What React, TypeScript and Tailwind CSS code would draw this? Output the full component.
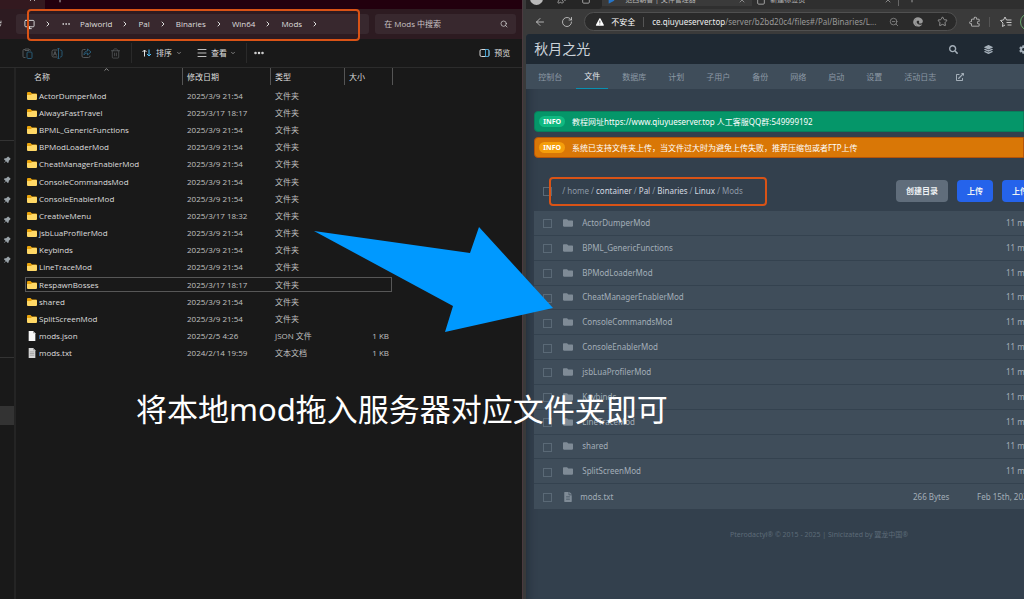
import { ReactNode } from "react";
import {
  ArrowLeft,
  ChevronDown,
  ChevronRight,
  ChevronUp,
  Ellipsis,
  File as FileIcon,
  Menu,
  Monitor,
  Plus,
  Puzzle,
  RotateCw,
  Search,
  Star,
  Trash2,
  X,
  ZoomOut,
} from "lucide-react";
import { FaCog, FaEdge, FaExternalLinkAlt, FaFileAlt, FaFolder, FaLayerGroup, FaSearch } from "react-icons/fa";
import { IoTriangle, IoWarning } from "react-icons/io5";
import { PiPushPinFill, PiPuzzlePiece } from "react-icons/pi";

type Entry = { name: string; date: string; kind: string; size?: string; icon?: "json" | "txt" };

const localEntries: Entry[] = [
  { name: "ActorDumperMod", date: "2025/3/9 21:54", kind: "文件夹" },
  { name: "AlwaysFastTravel", date: "2025/3/17 18:17", kind: "文件夹" },
  { name: "BPML_GenericFunctions", date: "2025/3/9 21:54", kind: "文件夹" },
  { name: "BPModLoaderMod", date: "2025/3/9 21:54", kind: "文件夹" },
  { name: "CheatManagerEnablerMod", date: "2025/3/9 21:54", kind: "文件夹" },
  { name: "ConsoleCommandsMod", date: "2025/3/9 21:54", kind: "文件夹" },
  { name: "ConsoleEnablerMod", date: "2025/3/9 21:54", kind: "文件夹" },
  { name: "CreativeMenu", date: "2025/3/17 18:32", kind: "文件夹" },
  { name: "jsbLuaProfilerMod", date: "2025/3/9 21:54", kind: "文件夹" },
  { name: "Keybinds", date: "2025/3/9 21:54", kind: "文件夹" },
  { name: "LineTraceMod", date: "2025/3/9 21:54", kind: "文件夹" },
  { name: "RespawnBosses", date: "2025/3/17 18:17", kind: "文件夹" },
  { name: "shared", date: "2025/3/9 21:54", kind: "文件夹" },
  { name: "SplitScreenMod", date: "2025/3/9 21:54", kind: "文件夹" },
  { name: "mods.json", date: "2025/2/5 4:26", kind: "JSON 文件", size: "1 KB", icon: "json" },
  { name: "mods.txt", date: "2024/2/14 19:59", kind: "文本文档", size: "1 KB", icon: "txt" },
];

const serverFolders = [
  "ActorDumperMod",
  "BPML_GenericFunctions",
  "BPModLoaderMod",
  "CheatManagerEnablerMod",
  "ConsoleCommandsMod",
  "ConsoleEnablerMod",
  "jsbLuaProfilerMod",
  "Keybinds",
  "LineTraceMod",
  "shared",
  "SplitScreenMod",
];

const serverTabs = ["控制台", "文件", "数据库", "计划", "子用户", "备份", "网络", "启动", "设置", "活动日志"];

function YellowFolder() {
  return (
    <svg viewBox="0 0 20 16" className="h-2 w-[10px] shrink-0" aria-hidden="true">
      <path d="M0 2a2 2 0 0 1 2-2h5l3 3h8a2 2 0 0 1 2 2v9H0z" fill="#e8a30c" />
      <path d="M0 6h8l2-2h8a2 2 0 0 1 2 2v8a2 2 0 0 1-2 2H2a2 2 0 0 1-2-2z" fill="#ffd866" />
    </svg>
  );
}

function Sheet({ lined }: { lined: boolean }) {
  return (
    <svg viewBox="0 0 14 18" className="mx-px h-[10px] w-2 shrink-0" aria-hidden="true">
      <path d="M1 0h8l4 4v14H1z" fill={lined ? "#d6d6d6" : "#f7f7f7"} />
      <path d="M9 0v4h4z" fill="#9a9a9a" />
      {lined && <path d="M3 7h8M3 10h8M3 13h8" stroke="#8d8d8d" strokeWidth="1.2" />}
    </svg>
  );
}

function PasteIcon() {
  return (
    <svg viewBox="0 0 22 22" className="size-[11px]" fill="none" strokeWidth="2" aria-hidden="true">
      <path d="M7 19H4a2 2 0 0 1-2-2V5a2 2 0 0 1 2-2h2M14 3h1a2 2 0 0 1 2 2M6 2h8v3H6z" stroke="#55585a" />
      <rect x="10" y="8" width="10" height="13" rx="2" stroke="#285a75" />
    </svg>
  );
}

function RenameIcon() {
  return (
    <svg viewBox="0 0 24 22" className="h-[11px] w-3" fill="none" strokeWidth="2" aria-hidden="true">
      <path d="M13 4H5a3 3 0 0 0-3 3v8a3 3 0 0 0 3 3h8M5 15l3-8 3 8M6 12h4" stroke="#55585a" />
      <path d="M13 1h4M15 1v20M13 21h4M18 4h1a3 3 0 0 1 3 3v8a3 3 0 0 1-3 3h-1" stroke="#285a75" />
    </svg>
  );
}

function ShareIcon() {
  return (
    <svg viewBox="0 0 22 22" className="size-[11px]" fill="none" strokeWidth="2" strokeLinejoin="round" aria-hidden="true">
      <path d="M9 3H5a3 3 0 0 0-3 3v10a3 3 0 0 0 3 3h10a3 3 0 0 0 3-3v-1" stroke="#55585a" />
      <path d="M13 2l7 6-7 6v-4c-4 0-6 2-7 4 0-5 3-8 7-8z" stroke="#285a75" />
    </svg>
  );
}

function Crumb({ children }: { children: ReactNode }) {
  return (
    <>
      <a href="#path" className="whitespace-nowrap">{children}</a>
      <ChevronRight size={8} strokeWidth={3} className="shrink-0" />
    </>
  );
}

function Explorer() {
  return (
    <section className="flex w-[51%] shrink-0 flex-col overflow-hidden bg-[#191919] font-['Open_Sans','Noto_Sans_CJK_SC',sans-serif] text-[8px] leading-3 text-[#dedede]">
      <div className="flex h-[9px] items-start overflow-hidden bg-[#22000e]">
        <div className="flex h-full w-[45px] justify-end bg-[#33191f] pr-2">
          <X size={9} className="-mt-1.5" />
        </div>
        <Plus size={10} className="-mt-1.5 ml-2.5" />
      </div>

      <div className="flex h-[30px] items-center gap-1.5 bg-[#2d1b21] pr-1.5">
        <RotateCw size={8} className="-ml-1.5 shrink-0" />
        <nav className="ml-2 flex h-5 flex-1 items-center gap-[9px] rounded-[3px] bg-[#38282e] pl-2">
          <Monitor size={11} className="shrink-0" />
          <ChevronRight size={8} strokeWidth={3} className="shrink-0" />
          <Ellipsis size={10} className="shrink-0" />
          <Crumb>Palworld</Crumb>
          <Crumb>Pal</Crumb>
          <Crumb>Binaries</Crumb>
          <Crumb>Win64</Crumb>
          <Crumb>Mods</Crumb>
        </nav>
        <label className="flex h-5 w-[141px] items-center rounded-[3px] bg-[#38282e] pr-2 pl-[9px]">
          <input aria-label="搜索" placeholder="在 Mods 中搜索" className="min-w-0 flex-1 bg-transparent outline-none placeholder:text-[#c9c2c5]" />
          <Search size={8} />
        </label>
      </div>

      <div className="flex h-[29px] items-center border-b border-[#2c2c2c] pr-3">
        <div className="flex items-center gap-[18px] pl-[22px] text-[#55585a]">
          <button aria-label="粘贴"><PasteIcon /></button>
          <button aria-label="重命名"><RenameIcon /></button>
          <button aria-label="共享"><ShareIcon /></button>
          <button aria-label="删除"><Trash2 size={11} strokeWidth={1.7} /></button>
        </div>
        <div className="ml-2.5 flex h-5 items-center gap-[14px] border-x border-[#2a2a2a] px-2.5">
          <button className="flex items-center gap-1">
            <svg viewBox="0 0 20 16" className="h-2 w-[10px]" fill="none" strokeWidth="2" aria-hidden="true">
              <path d="M5 15V2M1 6l4-4 4 4" stroke="#e4e4e4" />
              <path d="M14 1v13m-4-4 4 4 4-4" stroke="#4cc2ff" />
            </svg>
            排序
            <ChevronDown size={6} />
          </button>
          <button className="flex items-center gap-[3px]">
            <Menu size={12} strokeWidth={1.7} />
            查看
            <ChevronDown size={6} />
          </button>
        </div>
        <button aria-label="更多" className="ml-1.5"><Ellipsis size={12} strokeWidth={3} /></button>
        <button className="ml-auto flex items-center gap-1">
          <svg viewBox="0 0 20 16" className="h-2 w-[11px]" fill="none" strokeWidth="2" aria-hidden="true">
            <rect x="1" y="1" width="18" height="14" rx="3" stroke="#d5d5d5" />
            <path d="M12 1h4a3 3 0 0 1 3 3v8a3 3 0 0 1-3 3h-4z" stroke="#3d9fd0" />
          </svg>
          预览
        </button>
      </div>

      <div className="flex flex-1">
        <aside className="flex w-4 flex-col items-center border-r-2 border-[#242424] pt-[72px] text-[#9aa3a9]">
          <hr className="w-full border-[#333]" />
          <div className="mt-[15px] flex flex-col gap-[11px]">
            {[0, 1, 2, 3, 4, 5].map((pin) => (
              <PiPushPinFill key={pin} size={8} className="mb-px" />
            ))}
          </div>
          <hr className="mt-[92px] w-full border-[#333]" />
          <div className="mt-[48px] h-[19px] w-full bg-[#333]" />
        </aside>
        <div className="pl-2">
          <table className="h-[294px] w-[369px] table-fixed border-separate border-spacing-0 text-left">
            <colgroup>
              <col className="w-[159px]" />
              <col className="w-[88px]" />
              <col className="w-[74px]" />
              <col className="w-[48px]" />
            </colgroup>
            <thead>
              <tr className="h-[19px]">
                {["名称", "修改日期", "类型", "大小"].map((title, i) => (
                  <th key={title} className="pb-0.5 font-normal">
                    <div className={`relative flex h-[17px] items-center border-r border-[#555] ${i === 0 ? "pl-2.5" : "pl-1"}`}>
                      {title}
                      {i === 0 && <ChevronUp size={7} className="absolute -top-0.5 left-[79px]" />}
                    </div>
                  </th>
                ))}
              </tr>
            </thead>
            <tbody>
              {localEntries.map((entry) => {
                const focused = entry.name === "RespawnBosses";
                return (
                  <tr key={entry.name} className={focused ? "outline outline-1 -outline-offset-2 outline-[#575757]" : ""}>
                    <td className="py-0 pr-0 pl-[3px]">
                      <div className="flex items-center gap-0.5">
                        {entry.icon ? <Sheet lined={entry.icon === "txt"} /> : <YellowFolder />}
                        {entry.name}
                      </div>
                    </td>
                    <td className="py-0 pr-0 pl-1 text-[#c0c0c0]">{entry.date}</td>
                    <td className="py-0 pr-0 pl-1 text-[#c0c0c0]">{entry.kind}</td>
                    <td className="py-0 pr-1 pl-0 text-right text-[#c0c0c0]">{entry.size}</td>
                  </tr>
                );
              })}
            </tbody>
          </table>
        </div>
      </div>
    </section>
  );
}

function ServerRow({ name, size, date, file }: { name: string; size?: string; date: string; file?: boolean }) {
  return (
    <li className={`flex items-center bg-[#3f4d5a] pl-[9px] ${file ? "" : "border-b border-[#34424f]"}`}>
      <input type="checkbox" aria-label={name} className="mt-0.5 size-[9px] shrink-0 appearance-none border border-[#5a6976]" />
      <span className="ml-[11px] w-[15px] shrink-0 text-[#7f8b96]">
        {file ? <FaFileAlt size={10} /> : <FaFolder size={10} />}
      </span>
      <a href="#file" className={`flex-1 whitespace-nowrap ${file ? "pl-0.5" : "pl-1"}`}>{name}</a>
      <span className="w-16 shrink-0 whitespace-nowrap">{size}</span>
      <span className={`shrink-0 whitespace-nowrap ${file ? "w-[47px]" : "w-[18px]"}`}>{date}</span>
    </li>
  );
}

function Notice({ tone, children }: { tone: "green" | "amber"; children: ReactNode }) {
  const green = tone === "green";
  return (
    <div className={`flex h-[21px] items-center gap-[7px] rounded-l-sm border pl-1 text-white ${green ? "border-[#087f5b] bg-[#059669]" : "border-[#b45309] bg-[#d97706]"}`}>
      <span className={`rounded-full px-1 text-[7px] leading-[11px] font-bold ${green ? "bg-[#10b981]" : "bg-[#f59e0b]"}`}>INFO</span>
      <span className="whitespace-nowrap">{children}</span>
    </div>
  );
}

function Browser() {
  return (
    <section className="flex min-w-0 flex-1 flex-col overflow-hidden border-l border-[#4a3a3f] bg-[#3a3a3a] pl-[3px] font-['Noto_Sans','Noto_Sans_CJK_SC',sans-serif] text-[8px] leading-3 text-[#a3aeb8]">
      <div className="flex h-[9px] items-start overflow-hidden bg-[#2f2f2f] text-[7px] text-[#b5b5b5]">
        <div className="flex h-full w-[76px] shrink-0 gap-3.5 rounded-br bg-[#262626] pl-1">
          <span className="-mt-2 size-[13px] rounded-full bg-[#b9b9b9]" />
          <Puzzle size={10} className="-mt-1.5" />
          <FileIcon size={10} className="-mt-1.5" />
        </div>
        <div className="-mt-1.5 flex w-[150px] shrink-0 items-center gap-2.5 bg-[#3a3a3a] pr-1.5 pl-1.5">
          <IoTriangle size={7} className="rotate-90 text-[#2675c8]" />
          <span className="flex-1 whitespace-nowrap">范西朝香 | 文件管理器</span>
          <X size={8} />
        </div>
        <div className="-mt-1.5 flex w-[147px] shrink-0 items-center gap-1 border-r border-[#666] pr-1.5 pl-1">
          <FileIcon size={10} />
          <span className="flex-1 whitespace-nowrap">新建标签页</span>
          <X size={8} />
        </div>
        <Plus size={10} className="-mt-1.5 ml-2 shrink-0" />
      </div>

      <div className="flex h-[25px] items-center bg-[#3a3a3a] text-[#c8c8c8]">
        <button aria-label="返回" className="ml-2"><ArrowLeft size={12} strokeWidth={1.7} /></button>
        <button aria-label="刷新" className="ml-[15px]"><RotateCw size={12} strokeWidth={1.7} /></button>
        <div className="ml-[11px] flex h-[19px] w-[373px] shrink-0 items-center rounded-full border border-[#505050] bg-[#2a2a2a] pr-2 pl-2.5">
          <IoWarning size={10} className="text-white" />
          <span className="ml-1.5 text-white">不安全</span>
          <span className="mx-2 h-2.5 w-px bg-[#555]" />
          <span className="flex-1 truncate text-[#999]">
            <span className="text-[#f0f0f0]">ce.qiuyueserver.top</span>/server/b2bd20c4/files#/Pal/Binaries/L...
          </span>
          <ZoomOut size={10} className="shrink-0 text-[#888]" />
          <FaEdge size={10} className="ml-3.5 shrink-0 text-[#999]" />
          <Star size={11} className="ml-3.5 shrink-0 text-[#999]" />
        </div>
        <PiPuzzlePiece size={12} className="ml-3 shrink-0" />
        <span className="ml-2 h-2.5 w-px shrink-0 bg-[#555]" />
        <svg viewBox="0 0 24 24" className="ml-2.5 size-3 shrink-0" fill="none" stroke="currentColor" strokeWidth="2" strokeLinejoin="round" aria-hidden="true">
          <path d="M13 8l-3-6-3 6-6 1 5 5-1 7 5-3M13 8h10M13 13h10M15 18h8" />
        </svg>
        <span className="ml-2 size-[18px] shrink-0 rounded-full border border-[#69a36c]" />
      </div>

      <div className="flex flex-1 flex-col overflow-hidden rounded-tl bg-[#33404d] shadow-[inset_10px_0_8px_-8px_#252f39]">
        <header className="flex h-[30px] items-center bg-[#1f2933] pl-2">
          <a href="#home" className="text-[14px] leading-5 whitespace-nowrap text-[#cbd2d9]">秋月之光</a>
          <div className="ml-auto flex items-center gap-[26px]">
            <FaSearch size={9} />
            <FaLayerGroup size={9} />
            <FaCog size={9} className="-mr-1" />
          </div>
        </header>
        <nav className="flex h-[25px] items-stretch gap-1.5 bg-[#3f4d5a] pl-1">
          {serverTabs.map((tab) => (
            <a
              key={tab}
              href="#tab"
              className={`flex items-center px-2 whitespace-nowrap ${tab === "文件" ? "border-b border-[#0891b2] text-[#e4e7eb]" : "text-[#8d99a5]"}`}
            >
              {tab}
            </a>
          ))}
          <a href="#external" aria-label="外部链接" className="flex items-center px-1.5"><FaExternalLinkAlt size={8} /></a>
        </nav>

        <main className="flex flex-col pt-[22px] pl-2">
          <div className="flex flex-col gap-[5px]">
            <Notice tone="green">教程网址https://www.qiuyueserver.top 人工客服QQ群:549999192</Notice>
            <Notice tone="amber">系统已支持文件夹上传，当文件过大时为避免上传失败，推荐压缩包或者FTP上传</Notice>
          </div>

          <div className="mt-[21px] flex h-6 items-center overflow-hidden pl-[9px]">
            <input type="checkbox" aria-label="全选" className="size-[9px] shrink-0 appearance-none border border-[#5a6976]" />
            <nav className="ml-2.5 flex flex-1 gap-0.5 whitespace-nowrap text-[#8d99a5]">
              <span>/</span><span>home</span><span>/</span>
              <a href="#container" className="text-[#d5dae0]">container</a><span>/</span>
              <a href="#pal" className="text-[#d5dae0]">Pal</a><span>/</span>
              <a href="#binaries" className="text-[#d5dae0]">Binaries</a><span>/</span>
              <a href="#linux" className="text-[#d5dae0]">Linux</a><span>/</span>
              <span>Mods</span>
            </nav>
            <div className="-mr-3.5 flex shrink-0 gap-[9px] font-bold text-[#eef1f4]">
              <button className="h-[22px] rounded-sm bg-[#606d7b] px-2.5">创建目录</button>
              <button className="h-[22px] rounded-sm bg-[#2563eb] px-2.5">上传</button>
              <button className="h-[22px] rounded-sm bg-[#2563eb] px-2.5">上传</button>
            </div>
          </div>

          <ul className="mt-2 grid h-[298px] auto-rows-fr">
            {serverFolders.map((name) => (
              <ServerRow key={name} name={name} date="11 minutes ago" />
            ))}
            <ServerRow name="mods.txt" size="266 Bytes" date="Feb 15th, 2024" file />
          </ul>
        </main>

        <footer className="mt-5 pl-[88px] text-center text-[7px] text-[#5d6b78]">
          Pterodactyl® © 2015 - 2025 | Sinicizated by 翼龙中国®
        </footer>
      </div>
    </section>
  );
}

export default function App() {
  return (
    <div className="relative flex min-h-screen overflow-hidden bg-[#191919]">
      <Explorer />
      <Browser />
      <div className="pointer-events-none absolute top-[9px] left-[27px] h-8 w-[333px] rounded-sm border-2 border-[#d95316]" />
      <div className="pointer-events-none absolute top-[177px] left-[549px] h-[29px] w-[218px] rounded-sm border-2 border-[#d95316]" />
      <svg viewBox="0 0 240 106" className="pointer-events-none absolute top-[227px] left-[314px] h-[106px] w-[240px]" aria-hidden="true">
        <path d="M0 4 156 26 165 0 239 81 131 105 139 79z" fill="#0099ff" />
      </svg>
      <p className="pointer-events-none absolute top-[385px] left-[136px] font-['Noto_Sans','Noto_Sans_CJK_SC',sans-serif] text-[31px] leading-[48px] whitespace-nowrap text-white">
        将本地mod拖入服务器对应文件夹即可
      </p>
    </div>
  );
}
